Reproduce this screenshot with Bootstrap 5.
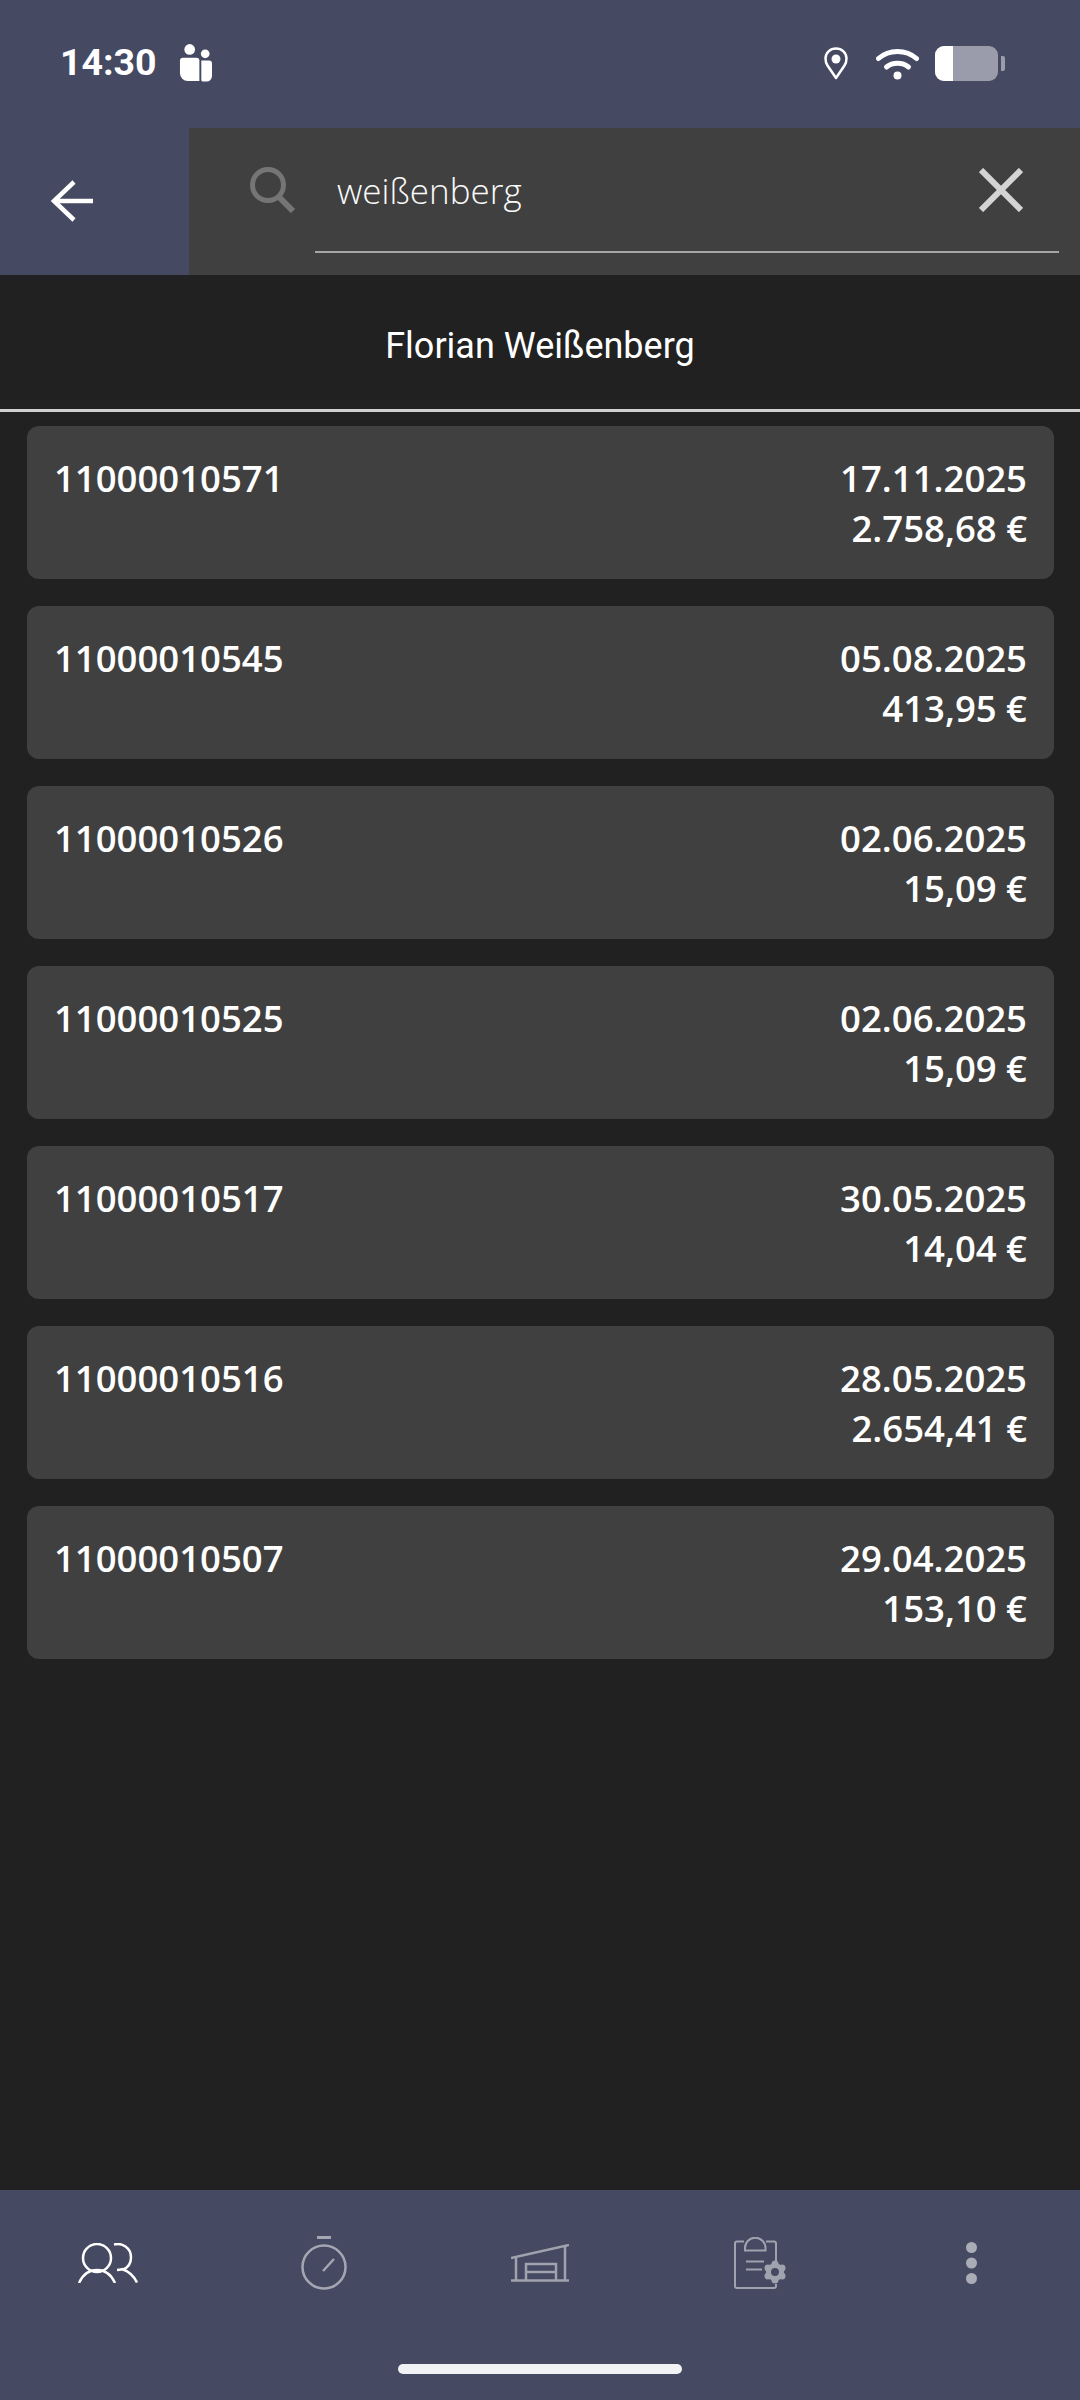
<!DOCTYPE html>
<html lang="de">
<head>
    <meta charset="utf-8">
    <title>Suche</title>
    <link rel="stylesheet" href="https://cdn.jsdelivr.net/npm/bootstrap@5.3.2/dist/css/bootstrap.min.css">
    <script src="https://cdn.jsdelivr.net/npm/bootstrap@5.3.2/dist/js/bootstrap.bundle.min.js"></script>
<style>
    body{
        background: #212121;
        color: #fff;
        font-family: "Open Sans", sans-serif;
    }
    .status-bar{
        height: 128px;
        background: #454962;
        padding: 0 75px 2px 60px;
    }
    .status-time{
        font-family: Roboto, sans-serif;
        font-weight: 700;
        font-size: 37.500px;
        line-height: 1;
        margin-right: 22px;
    }
    .pin-icon{ margin-right: 28px; }
    .wifi-icon{ margin-right: 16px; }
    .top-row{ height: 147px; }
    .back-cell{
        width: 189px;
        background: #454962;
        padding-left: 50px;
        padding-bottom: 2px;
    }
    .search-cell{
        background: #404040;
        padding-left: 61px;
        padding-right: 21px;
    }
    .search-glass{ margin-top: 39px; margin-right: 19px; }
    .search-box{
        height: 125px;
        border-bottom: 2px solid #a6a6a6;
        padding: 0 36px 0 22px;
    }
    .search-text{
        font-family: "Open Sans", sans-serif;
        font-weight: 300;
        font-size: 35px;
        line-height: 1;
        color: #fafafa;
        margin-top: 2px;
    }
    .person-row{
        height: 137px;
        border-bottom: 3px solid #d0d0d0;
        font-family: Roboto, sans-serif;
        font-size: 36px;
        font-weight: 400;
        padding-top: 8px;
    }
    .order-list{
        padding: 14px 26px 0 27px;
        gap: 27px;
    }
    .order-item{
        height: 153px;
        background: #404040;
        border-radius: 12px;
        padding: 27px 27px 0 27px;
        font-size: 36.500px;
        font-weight: 600;
        line-height: 50px;
    }
    .bottom-nav{ background: #454962; }
    .nav-cell{ height: 146px; }
    .clip-icon{ margin-left: 8px; }
    .dots-icon{ margin-right: 2px; }
    .home-bar{
        width: 284px;
        height: 10px;
        background: #f1f2f4;
        border-radius: 5px;
        margin: 28px auto 26px;
    }
</style>
</head>
<body>
    <div class="d-flex flex-column min-vh-100">
        <div class="status-bar d-flex align-items-center">
            <span class="status-time">14:30</span>
            <svg width="33" height="38" viewBox="0 0 34 39" fill="#fff">
                <circle cx="11" cy="5.500" r="5.500"/>
                <circle cx="27" cy="10" r="4.500"/>
                <path d="M4 14h14a3 3 0 0 1 3 3v21H9a8 8 0 0 1-8-8V17a3 3 0 0 1 3-3z"/>
                <path d="M23 17h8a3 3 0 0 1 3 3v13a5.500 5.500 0 0 1-5.500 5.500H24c-.7-.5-1-1-1-2z"/>
            </svg>
            <div class="flex-grow-1"></div>
            <svg class="pin-icon" width="24" height="33" viewBox="0 0 24 33">
                <path d="M12 31 3.500 18.500C1.500 15.500 1.500 12 1.500 11.500 1.500 5.700 6.200 1.500 12 1.500s10.500 4.200 10.500 10c0 .5 0 4-2 7z" fill="none" stroke="#fff" stroke-width="2.500" stroke-linejoin="round"/>
                <circle cx="12" cy="12" r="4.500" fill="#fff"/>
            </svg>
            <svg class="wifi-icon" width="43" height="33" viewBox="0 0 43 33" fill="none" stroke="#fff" stroke-width="5" stroke-linecap="round">
                <path d="M2.500 11.500C13 2 30 2 40.500 11.500"/>
                <path d="M10.500 20c6-5 16-5 22 0"/>
                <circle cx="21.500" cy="28.500" r="4" fill="#fff" stroke="none"/>
            </svg>
            <svg width="70" height="35" viewBox="0 0 70 35">
                <rect x="0" y="0" width="63" height="35" rx="9" fill="#9a9cab"/>
                <path d="M9 0h9v35H9a9 9 0 0 1-9-9V9a9 9 0 0 1 9-9z" fill="#fff"/>
                <path d="M66 10h2a2 2 0 0 1 2 2v11a2 2 0 0 1-2 2h-2z" fill="#9a9cab"/>
            </svg>
        </div>

        <div class="top-row d-flex">
            <div class="back-cell d-flex align-items-center">
                <svg width="43" height="42" viewBox="0 0 43 42" fill="none" stroke="#fff" stroke-width="4.500">
                    <path d="M43 21H4"/>
                    <path d="M24 2 4 21l20 19"/>
                </svg>
            </div>
            <div class="search-cell flex-grow-1 d-flex align-items-start">
                <svg class="search-glass" width="46" height="46" viewBox="0 0 46 46" fill="none" stroke="#757575">
                    <circle cx="18" cy="18" r="15.500" stroke-width="5"/>
                    <path d="M28 29l15 15" stroke-width="6"/>
                </svg>
                <div class="search-box flex-grow-1 d-flex align-items-center justify-content-between">
                    <span class="search-text">weißenberg</span>
                    <svg width="44" height="44" viewBox="0 0 44 44" stroke="#d4d4d4" stroke-width="6">
                        <path d="M2 2l40 40M42 2 2 42"/>
                    </svg>
                </div>
            </div>
        </div>

        <div class="person-row d-flex align-items-center justify-content-center">Florian Weißenberg</div>

        <div class="order-list d-flex flex-column">
            <div class="order-item d-flex justify-content-between">
                <div>11000010571</div>
                <div class="text-end">17.11.2025<br>2.758,68 €</div>
            </div>
            <div class="order-item d-flex justify-content-between">
                <div>11000010545</div>
                <div class="text-end">05.08.2025<br>413,95 €</div>
            </div>
            <div class="order-item d-flex justify-content-between">
                <div>11000010526</div>
                <div class="text-end">02.06.2025<br>15,09 €</div>
            </div>
            <div class="order-item d-flex justify-content-between">
                <div>11000010525</div>
                <div class="text-end">02.06.2025<br>15,09 €</div>
            </div>
            <div class="order-item d-flex justify-content-between">
                <div>11000010517</div>
                <div class="text-end">30.05.2025<br>14,04 €</div>
            </div>
            <div class="order-item d-flex justify-content-between">
                <div>11000010516</div>
                <div class="text-end">28.05.2025<br>2.654,41 €</div>
            </div>
            <div class="order-item d-flex justify-content-between">
                <div>11000010507</div>
                <div class="text-end">29.04.2025<br>153,10 €</div>
            </div>
        </div>

        <div class="bottom-nav mt-auto">
            <div class="row g-0">
                <div class="col nav-cell d-flex align-items-center justify-content-center">
                    <svg width="60" height="40" viewBox="0 0 60 40" fill="none" stroke="#fff" stroke-width="2.500">
                        <ellipse cx="19" cy="15" rx="14" ry="14"/>
                        <path d="M1 40c4-9 10-13 18-13s14 4 18 13"/>
                        <path d="M36 1.500c8-2 17 3 17 13 0 6-3 10-8 12 6 2 11 7 14 13"/>
                        <path d="M39 27c2 0 4-.5 6-1"/>
                    </svg>
                </div>
                <div class="col nav-cell d-flex align-items-center justify-content-center">
                    <svg width="46" height="54" viewBox="0 0 46 54" fill="none" stroke="#a4a6b1" stroke-width="2.500">
                        <path d="M16 1.500h14" stroke-width="3"/>
                        <circle cx="23" cy="31" r="21.500"/>
                        <path d="M22 35 33 23"/>
                    </svg>
                </div>
                <div class="col nav-cell d-flex align-items-center justify-content-center">
                    <svg width="58" height="38" viewBox="0 0 58 38" fill="none" stroke="#a0a2ae" stroke-width="2.500">
                        <path d="M0 14 58 1"/>
                        <path d="M5 13v23M54 2v34"/>
                        <path d="M0 36.500h58"/>
                        <path d="M15 36V20h30v16M15 28h30"/>
                    </svg>
                </div>
                <div class="col nav-cell d-flex align-items-center justify-content-center">
                    <svg class="clip-icon" width="52" height="52" viewBox="0 0 52 52" fill="none" stroke="#a0a2ae" stroke-width="2">
                        <path d="M10 4.500H3a2 2 0 0 0-2 2V49a2 2 0 0 0 2 2h37a2 2 0 0 0 2-2v-2"/>
                        <path d="M32 4.500h8a2 2 0 0 1 2 2V24"/>
                        <path d="M11 13.500h20.500V11a10 10 0 0 0-20.500 0z"/>
                        <path d="M12 24.500h18M12 32.500h16"/>
                        <circle cx="41" cy="35" r="6.500" stroke-width="5"/>
                        <g fill="#a0a2ae" stroke="none">
                            <circle cx="41" cy="27" r="3.500"/>
                            <circle cx="41" cy="43" r="3.500"/>
                            <circle cx="34" cy="31" r="3.500"/>
                            <circle cx="48" cy="31" r="3.500"/>
                            <circle cx="34" cy="39" r="3.500"/>
                            <circle cx="48" cy="39" r="3.500"/>
                        </g>
                    </svg>
                </div>
                <div class="col nav-cell d-flex align-items-center justify-content-center">
                    <svg class="dots-icon" width="11" height="42" viewBox="0 0 11 42" fill="#abadb6">
                        <circle cx="5.500" cy="5.500" r="5.500"/>
                        <circle cx="5.500" cy="21" r="5.500"/>
                        <circle cx="5.500" cy="36.500" r="5.500"/>
                    </svg>
                </div>
            </div>
            <div class="home-bar"></div>
        </div>
    </div>
</body>
</html>
